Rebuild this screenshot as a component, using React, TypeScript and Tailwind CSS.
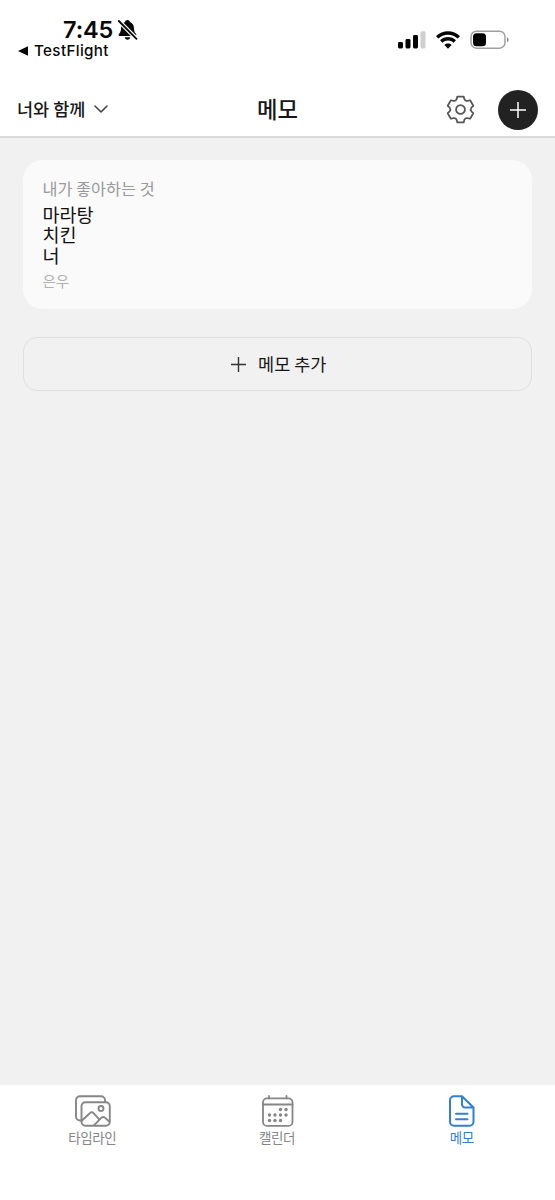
import type { ReactNode } from "react";

function MutedBell() {
  return (
    <svg className="h-[22px] w-[21px]" viewBox="0 0 21 22" fill="#080808">
      <path d="M10.500 1c1.300 0 2.300.8 2.500 1.900 2.500.9 3.800 3 3.900 5.600.1 3.400.600 4.800 2 6.300 1 1.200.500 2.300-.900 2.300H3c-1.400 0-1.900-1.100-.900-2.300 1.400-1.500 1.900-2.900 2-6.300.1-2.600 1.400-4.700 3.900-5.600C8.200 1.800 9.200 1 10.500 1z" />
      <path d="M7.700 18.300h5.600c-.2 1.500-1.300 2.400-2.800 2.400s-2.600-.9-2.800-2.400z" />
      <path d="M1.800 2 19.500 19.800" stroke="#fff" strokeWidth="4.200" />
      <path d="M1.800 2 19.500 19.800" stroke="#080808" strokeWidth="1.800" strokeLinecap="round" />
    </svg>
  );
}

function Signal() {
  return (
    <svg className="h-[18px] w-[28px]" viewBox="0 0 28 18" fill="#050505">
      <rect x="0" y="11" width="5" height="6.500" rx="1.400" />
      <rect x="7.500" y="8" width="5" height="9.500" rx="1.400" />
      <rect x="15" y="4" width="5" height="13.500" rx="1.400" />
      <rect x="22.500" y="0.300" width="5" height="17.200" rx="1.400" fill="#cfcfcf" />
    </svg>
  );
}

function Wifi() {
  return (
    <svg className="h-[18px] w-[24px]" viewBox="0 0 24 18" fill="none" stroke="#050505" strokeWidth="3.300">
      <path d="M1.200 6.400C7.200.5 16.800.5 22.800 6.400" />
      <path d="M5.200 10.500c3.800-3.700 9.800-3.700 13.600 0" />
      <path d="M8.400 14c2-1.900 5.200-1.900 7.200 0L12 17.700z" fill="#050505" stroke="none" />
    </svg>
  );
}

function Battery() {
  return (
    <svg className="h-[20px] w-[39px]" viewBox="0 0 39 20">
      <rect x="1" y="1.200" width="34" height="17" rx="5.500" fill="none" stroke="#a0a0a0" strokeWidth="1.500" />
      <rect x="3" y="3.200" width="13" height="13" rx="3.500" fill="#000" />
      <path d="M37 7.200c2 .9 2 4.100 0 5z" fill="#858585" />
    </svg>
  );
}

function Gear() {
  return (
    <svg className="h-[29px] w-[29px]" viewBox="-15 -15 30 30" fill="none" stroke="#555" strokeWidth="1.800" strokeLinejoin="round">
      <path d="M-3.300-13.400H3.300L4-10.700Q4.900-8.500 7.200-8.900L9.950-9.560 13.250-3.840 11.200-1.900Q9.800 0 11.200 1.900L13.250 3.840 9.950 9.560 7.200 8.900Q4.900 8.500 4 10.700L3.300 13.400H-3.300L-4 10.700Q-4.900 8.500-7.200 8.900L-9.950 9.560-13.250 3.840-11.200 1.900Q-9.800 0-11.200-1.900L-13.250-3.840-9.950-9.560-7.200-8.900Q-4.900-8.500-4-10.700Z" />
      <circle r="4.600" />
    </svg>
  );
}

function Plus({ className }: { className: string }) {
  return (
    <svg className={className} viewBox="0 0 16 16" fill="none" stroke="currentColor" strokeWidth="1.500">
      <path d="M8 0v16M0 8h16" />
    </svg>
  );
}

function Photos() {
  return (
    <svg className="h-[32px] w-[36px]" viewBox="0 0 36 32" fill="none" stroke="currentColor" strokeWidth="1.900" strokeLinecap="round" strokeLinejoin="round">
      <path d="M6.500 25.500H5a4 4 0 0 1-4-4V5.200a4 4 0 0 1 4-4h21a4 4 0 0 1 4 4v1.600" />
      <rect x="6.500" y="7.200" width="28.300" height="23.500" rx="4" />
      <path d="m7 25.500 7.800-7.300a2.700 2.700 0 0 1 3.800 0l5.400 6M19.200 30.200l7-7.300a3 3 0 0 1 4 0l4 3.600" />
      <circle cx="26" cy="13.500" r="2.500" />
    </svg>
  );
}

const days = [
  [18.500, 14.500], [24, 14.500],
  [7.500, 20], [13, 20], [18.500, 20], [24, 20],
  [7.500, 25.500], [13, 25.500], [18.500, 25.500],
];

function CalendarIcon() {
  return (
    <svg className="h-[32px] w-[32px]" viewBox="0 0 32 32" fill="none" stroke="currentColor" strokeWidth="1.800" strokeLinecap="round">
      <rect x="1" y="3.400" width="29.500" height="27.500" rx="4" />
      <path d="M1 9.500h29.500M7 1v2.400M24.500 1v2.400" />
      {days.map(([x, y]) => (
        <circle key={`${x}-${y}`} cx={x} cy={y} r="1.700" fill="currentColor" stroke="none" />
      ))}
    </svg>
  );
}

function NoteIcon() {
  return (
    <svg className="h-[32px] w-[26px]" viewBox="0 0 26 32" fill="none" stroke="currentColor" strokeWidth="2" strokeLinecap="round" strokeLinejoin="round">
      <path d="M13 1.200H5a4 4 0 0 0-4 4v21.500a4 4 0 0 0 4 4h15.500a4 4 0 0 0 4-4V12.500zM13 1.200v8.300a3 3 0 0 0 3 3h8.500M7 18.700h11.500M7 24.300h11.500" />
    </svg>
  );
}

function Tab({ icon, label, active = false }: { icon: ReactNode; label: string; active?: boolean }) {
  return (
    <button className={`flex flex-1 flex-col items-center ${active ? "text-[#347fce]" : "text-[#868686]"}`}>
      <span className="flex pl-[1.500px]">{icon}</span>
      <span className="text-[13.500px] leading-[20px] tracking-[-0.400px]">{label}</span>
    </button>
  );
}

export default function App() {
  return (
    <div className="flex h-[1200px] w-full flex-col bg-[#f1f1f1] font-['Noto_Sans_CJK_KR',sans-serif] text-[#171717]">
      <header className="flex h-[138px] shrink-0 flex-col border-b-2 border-[#d9d9d9] bg-white">
        <div className="flex h-[82px] items-start justify-between pr-[46px] pl-[18px] font-['Inter',sans-serif] text-[#080808]">
          <div className="pt-[17px]">
            <div className="flex items-center gap-[4px] pl-[45px]">
              <span className="text-[23.500px] leading-[25px] font-semibold tracking-[-0.100px]">7:45</span>
              <MutedBell />
            </div>
            <div className="flex items-center gap-[6px]">
              <svg className="h-[10px] w-[10px]" viewBox="0 0 10 10" fill="#080808">
                <path d="M0 5 10 .2v9.600z" />
              </svg>
              <span className="text-[15.200px] leading-[18px] font-medium tracking-[0.350px]">TestFlight</span>
            </div>
          </div>
          <div className="flex items-center pt-[30px]">
            <Signal />
            <div className="ml-[10px] flex"><Wifi /></div>
            <div className="ml-[10px] flex"><Battery /></div>
          </div>
        </div>
        <div className="grid h-[54px] grid-cols-3 items-center pr-[17px] pl-[17px]">
          <button className="flex items-center gap-[9px]">
            <span className="text-[17.500px] leading-[24px] font-medium">너와 함께</span>
            <svg className="h-[8px] w-[14px]" viewBox="0 0 14 8" fill="none" stroke="#444" strokeWidth="1.600" strokeLinecap="round" strokeLinejoin="round">
              <path d="m1 1 6 6 6-6" />
            </svg>
          </button>
          <h1 className="pb-[3px] text-center text-[22.300px] leading-[30px] font-medium">메모</h1>
          <div className="flex items-center justify-end gap-[23px] pt-px">
            <button aria-label="설정">
              <Gear />
            </button>
            <button aria-label="추가" className="flex h-[40px] w-[40px] items-center justify-center rounded-full bg-[#222] text-white">
              <Plus className="h-[16px] w-[16px]" />
            </button>
          </div>
        </div>
      </header>

      <main className="flex flex-1 flex-col pr-[23px] pl-[22.500px] pt-[22px]">
        <article className="h-[149px] rounded-[20px] bg-[#fafafa] px-[20px] pt-[17px]">
          <h2 className="text-[16.300px] leading-[22px] text-[#999]">내가 좋아하는 것</h2>
          <p className="mt-[5px] text-[18.500px] leading-[20.300px] whitespace-pre-line text-[#111]">{"마라탕\n치킨\n너"}</p>
          <p className="mt-[6px] text-[14.500px] leading-[20px] text-[#b0b0b0]">은우</p>
        </article>
        <button className="mt-[28px] flex h-[54px] items-center justify-center gap-[12px] rounded-[14px] border-[1.500px] border-[#dfdfdf] pl-[3px]">
          <Plus className="h-[15px] w-[15px] text-[#333]" />
          <span className="text-[17.500px] leading-[24px]">메모 추가</span>
        </button>
      </main>

      <nav className="flex h-[115px] shrink-0 items-start bg-white pt-[10px] pr-px">
        <Tab icon={<Photos />} label="타임라인" />
        <Tab icon={<CalendarIcon />} label="캘린더" />
        <Tab icon={<NoteIcon />} label="메모" active />
      </nav>
    </div>
  );
}
